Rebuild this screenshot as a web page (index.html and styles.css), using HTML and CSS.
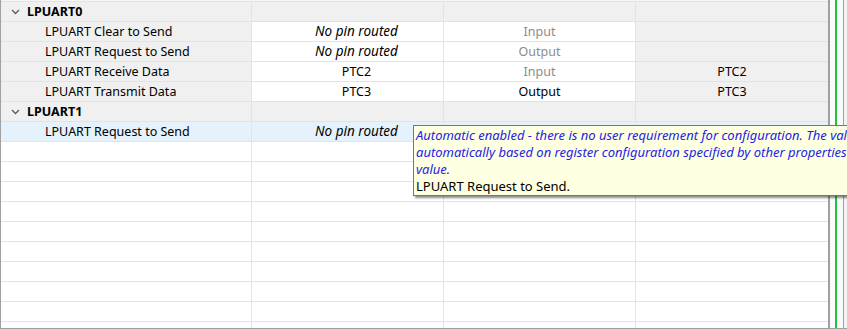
FILE: index.html
```html
<!DOCTYPE html>
<html lang="en">
<head>
    <meta charset="UTF-8" />
    <title>Signals</title>
    <link rel="stylesheet" href="styles.css">
</head>
<body>
    <div class="window">
        <div class="grid">
            <div class="top-strip"></div>

            <div class="row group">
                <div class="cell name">
                    <svg class="chevron" width="9" height="6" viewBox="0 0 9 6"><path d="M1 1 L4.5 4.5 L8 1" fill="none" stroke="#5a5a5a" stroke-width="1.3"/></svg>
                    <span>LPUART0</span>
                </div>
                <div class="cell"></div>
                <div class="cell"></div>
                <div class="cell"></div>
            </div>
            <div class="row">
                <div class="cell name signal">LPUART Clear to Send</div>
                <div class="cell pin none">No pin routed</div>
                <div class="cell dir muted">Input</div>
                <div class="cell gray"></div>
            </div>
            <div class="row">
                <div class="cell name signal">LPUART Request to Send</div>
                <div class="cell pin none">No pin routed</div>
                <div class="cell dir muted">Output</div>
                <div class="cell gray"></div>
            </div>
            <div class="row">
                <div class="cell name signal">LPUART Receive Data</div>
                <div class="cell pin">PTC2</div>
                <div class="cell dir muted">Input</div>
                <div class="cell gray">PTC2</div>
            </div>
            <div class="row">
                <div class="cell name signal">LPUART Transmit Data</div>
                <div class="cell pin">PTC3</div>
                <div class="cell dir">Output</div>
                <div class="cell gray">PTC3</div>
            </div>

            <div class="row group">
                <div class="cell name">
                    <svg class="chevron" width="9" height="6" viewBox="0 0 9 6"><path d="M1 1 L4.5 4.5 L8 1" fill="none" stroke="#5a5a5a" stroke-width="1.3"/></svg>
                    <span>LPUART1</span>
                </div>
                <div class="cell"></div>
                <div class="cell"></div>
                <div class="cell"></div>
            </div>
            <div class="row selected">
                <div class="cell name signal">LPUART Request to Send</div>
                <div class="cell pin none">No pin routed</div>
                <div class="cell"></div>
                <div class="cell"></div>
            </div>

            <div class="row empty"><div class="cell"></div><div class="cell"></div><div class="cell"></div><div class="cell"></div></div>
            <div class="row empty"><div class="cell"></div><div class="cell"></div><div class="cell"></div><div class="cell"></div></div>
            <div class="row empty"><div class="cell"></div><div class="cell"></div><div class="cell"></div><div class="cell"></div></div>
            <div class="row empty"><div class="cell"></div><div class="cell"></div><div class="cell"></div><div class="cell"></div></div>
            <div class="row empty"><div class="cell"></div><div class="cell"></div><div class="cell"></div><div class="cell"></div></div>
            <div class="row empty"><div class="cell"></div><div class="cell"></div><div class="cell"></div><div class="cell"></div></div>
            <div class="row empty"><div class="cell"></div><div class="cell"></div><div class="cell"></div><div class="cell"></div></div>
            <div class="row empty"><div class="cell"></div><div class="cell"></div><div class="cell"></div><div class="cell"></div></div>
            <div class="row empty"><div class="cell"></div><div class="cell"></div><div class="cell"></div><div class="cell"></div></div>
            <div class="row empty last"><div class="cell"></div><div class="cell"></div><div class="cell"></div><div class="cell"></div></div>
        </div>

        <div class="side">
            <div class="side-line"></div>
            <div class="side-gap"></div>
            <div class="side-green"></div>
            <div class="side-gap wide"></div>
            <div class="side-line"></div>
        </div>

        <div class="tooltip">
            <div class="tip-auto">Automatic enabled - there is no user requirement for configuration. The value is set<br>automatically based on register configuration specified by other properties or reset<br>value.</div>
            <div class="tip-desc">LPUART Request to Send.</div>
        </div>
    </div>
</body>
</html>
```

FILE: styles.css
```css
:root {
    --grid-line: #e3e3e3;
    --cell-gray: #f0f0f0;
    --frame: #a0a0a0;
    --selected: #e5f1fb;
    --muted-text: #8c8c8c;
    --tip-bg: #ffffe1;
    --tip-blue: #2323e8;
}

html, body {
    margin: 0;
    height: 100%;
    overflow: hidden;
    background: #ffffff;
}

body {
    font-family: "Noto Sans", "Open Sans", sans-serif;
    font-size: 12.5px;
    color: #000000;
}

.window {
    position: relative;
    display: flex;
    height: 328px;
    border-bottom: 1px solid var(--frame);
}

.grid {
    width: 827px;
    border-left: 1px solid var(--frame);
    border-right: 1px solid var(--frame);
    overflow: hidden;
}

.top-strip {
    height: 1px;
    border-bottom: 1px solid var(--grid-line);
    background: #f6f6f6;
}

.row {
    display: grid;
    grid-template-columns: 251px 192px 192px 192px;
    height: 20px;
}

.cell {
    box-sizing: border-box;
    height: 20px;
    border-right: 1px solid var(--grid-line);
    border-bottom: 1px solid var(--grid-line);
    display: flex;
    align-items: center;
    justify-content: center;
    white-space: nowrap;
    line-height: 19px;
}

.cell:last-child {
    border-right: none;
}

.group .cell {
    background: var(--cell-gray);
}

.group .name {
    justify-content: flex-start;
    padding-left: 10px;
    gap: 7px;
    font-weight: 700;
}

.chevron {
    flex: none;
}

.signal {
    justify-content: flex-start;
    padding-left: 44px;
    background: var(--cell-gray);
}

.pin {
    padding-left: 18px;
}

.none {
    font-style: italic;
    font-size: 13.5px;
}

.muted {
    color: var(--muted-text);
}

.gray {
    background: var(--cell-gray);
}

.selected .cell {
    background: var(--selected);
}

.empty .cell {
    background: #ffffff;
}

.last .cell {
    height: 26px;
    border-bottom: none;
}

.tooltip {
    position: absolute;
    left: 413px;
    right: 0;
    top: 125px;
    height: 67px;
    padding: 1px 2px;
    background: var(--tip-bg);
    border: 1px solid #767676;
    border-right: none;
    box-shadow: 2px 2px 2px rgba(0, 0, 0, 0.45);
    font-size: 13px;
    line-height: 17px;
    white-space: nowrap;
    overflow: hidden;
}

.tip-auto {
    color: var(--tip-blue);
    font-style: italic;
}

.side {
    flex: 1;
    display: flex;
    background: #f4f4f4;
}

.side-line {
    width: 1px;
    background: var(--frame);
}

.side-gap {
    width: 5px;
    background: #fbfbfb;
}

.side-gap.wide {
    width: 6px;
}

.side-green {
    width: 2px;
    background: #1ec43c;
}
```
